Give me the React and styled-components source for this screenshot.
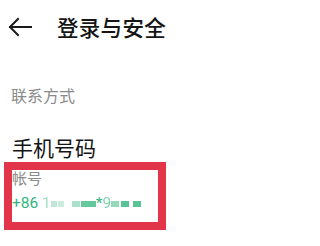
import React from "react";
import styled, { createGlobalStyle } from "styled-components";

const GlobalStyle = createGlobalStyle`
  html, body {
    margin: 0;
    padding: 0;
    background: #ffffff;
  }
  body {
    font-family: "Noto Sans CJK SC", "Noto Sans", sans-serif;
  }
`;

const Page = styled.div`
  width: 276px;
  height: 246px;
  background: #fff;
  overflow: hidden;
`;

const Header = styled.div`
  display: flex;
  align-items: center;
  height: 54px;
`;

const BackButton = styled.button`
  display: flex;
  align-items: center;
  justify-content: center;
  width: 26px;
  height: 26px;
  margin-left: 7px;
  padding: 0;
  border: none;
  background: none;
  color: #1a1a1a;
`;

const Title = styled.h1`
  margin: 0 0 0 24px;
  font-size: 21.5px;
  font-weight: 500;
  line-height: 28px;
  color: #151515;
  letter-spacing: 0.3px;
`;

const SectionLabel = styled.div`
  margin: 30px 0 0 11px;
  font-size: 16px;
  line-height: 22px;
  color: #8a8a8a;
`;

const ItemTitle = styled.div`
  margin: 27px 0 0 12px;
  font-size: 21px;
  line-height: 28px;
  color: #141414;
`;

const Highlight = styled.div`
  box-sizing: border-box;
  width: 162px;
  height: 68px;
  margin: 1px 0 0 4px;
  border: 8px solid #e2354a;
`;

const Caption = styled.div`
  margin: -2.5px 0 0 0;
  font-size: 15px;
  line-height: 20px;
  color: #8c8c8c;
`;

const Account = styled.div`
  display: flex;
  align-items: center;
  margin-top: 5px;
  font-family: Roboto, "Noto Sans", sans-serif;
  font-size: 15.5px;
  line-height: 20px;
  color: #2fb67c;
  white-space: pre;
`;

const Faint = styled.span`
  color: #2fb67c;
  opacity: ${(p) => p.$o || 0.45};
`;

const Mask = styled.span`
  display: inline-block;
  width: ${(p) => p.$w}px;
  height: 6px;
  margin: 2px ${(p) => p.$gap || 0}px 0 0;
  background: #2fb67c;
  opacity: ${(p) => p.$o || 0.6};
  filter: blur(0.6px);
`;

const BackArrow = () => (
  <svg width="24" height="20" viewBox="0 0 24 20" fill="none">
    <path
      d="M23 10H2M10 2L2 10l8 8"
      stroke="currentColor"
      strokeWidth="2"
      strokeLinecap="square"
    />
  </svg>
);

export default function App() {
  return (
    <Page>
      <GlobalStyle />
      <Header>
        <BackButton aria-label="返回">
          <BackArrow />
        </BackButton>
        <Title>登录与安全</Title>
      </Header>
      <SectionLabel>联系方式</SectionLabel>
      <ItemTitle>手机号码</ItemTitle>
      <Highlight>
        <Caption>帐号</Caption>
        <Account>
          +86 <Faint>1</Faint>
          <Mask $w={6} $o={0.3} $gap={1} />
          <Mask $w={6} $o={0.25} $gap={8} />
          <Mask $w={8} $o={0.4} $gap={1} />
          <Mask $w={15} $o={0.75} $gap={0} />
          *<Faint $o={0.6}>9</Faint>
          <Mask $w={8} $o={0.5} $gap={2} />
          <Mask $w={8} $o={0.8} $gap={4} />
          <Mask $w={8} $o={0.8} $gap={0} />
        </Account>
      </Highlight>
    </Page>
  );
}
